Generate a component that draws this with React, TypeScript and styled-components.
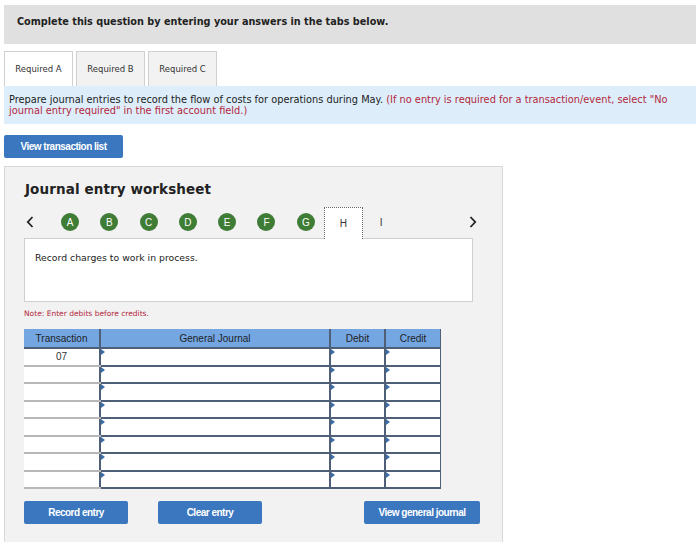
import styled, { createGlobalStyle } from 'styled-components'

const GlobalStyle = createGlobalStyle`
  html, body {
    margin: 0;
    padding: 0;
    background: #fff;
  }
  body {
    font-family: 'DejaVu Sans', Verdana, sans-serif;
    color: #222;
  }
`

const Page = styled.div`
  width: 700px;
  padding: 5px 4px 0 4px;
  box-sizing: border-box;
`

const Banner = styled.div`
  background: #e0e0e0;
  height: 39px;
  box-sizing: border-box;
  display: flex;
  align-items: center;
  padding: 0 0 6px 13px;
  font-size: 9.7px;
  font-weight: 700;
  color: #222;
`

const Tabs = styled.div`
  display: flex;
  gap: 3px;
  margin-top: 7px;
`

const Tab = styled.div<{ $active?: boolean }>`
  width: 69px;
  height: 35px;
  box-sizing: border-box;
  display: flex;
  align-items: center;
  justify-content: center;
  font-size: 8.5px;
  color: #333;
  border: 1px solid #d0d0d0;
  border-bottom: none;
  background: ${(p) => (p.$active ? '#fff' : '#f2f2f2')};
`

const Info = styled.div`
  background: #ddeefa;
  padding: 8px 5px 0 5px;
  font-size: 9.8px;
  line-height: 11px;
  color: #222;
  height: 38px;
  box-sizing: border-box;
`

const Red = styled.span`
  color: #b3263b;
`

const Button = styled.button<{ $w: number }>`
  width: ${(p) => p.$w}px;
  height: 23px;
  background: #3a77bf;
  color: #fff;
  border: none;
  border-radius: 2px;
  font-family: 'Liberation Sans', Arial, sans-serif;
  font-weight: 700;
  font-size: 10px;
  letter-spacing: -0.5px;
  padding: 0;
  cursor: pointer;
`

const TopButtonRow = styled.div`
  margin-top: 11px;
`

const Panel = styled.div`
  margin-top: 8px;
  width: 499px;
  height: 380px;
  box-sizing: border-box;
  background: #f2f2f2;
  border: 1px solid #d8d8d8;
  border-bottom: none;
  padding: 14px 0 0 19px;
`

const Title = styled.h2`
  margin: 0 0 0 1px;
  font-size: 13.5px;
  font-weight: 700;
  color: #222;
  letter-spacing: 0.1px;
`

const NavRow = styled.div`
  display: flex;
  align-items: center;
  height: 32px;
  margin-top: 9px;
`

const Arrow = styled.span`
  width: 12px;
  display: flex;
  justify-content: center;
  color: #222;
`

const Circle = styled.span`
  width: 18px;
  height: 18px;
  border-radius: 50%;
  background: #3f7c36;
  color: #fff;
  font-family: 'Liberation Sans', Arial, sans-serif;
  font-size: 10px;
  display: flex;
  align-items: center;
  justify-content: center;
  flex-shrink: 0;
`

const Circles = styled.div`
  display: flex;
  align-items: center;
  gap: 21.3px;
  margin-left: 25px;
`

const Current = styled.div`
  width: 39px;
  height: 32px;
  box-sizing: border-box;
  margin-left: 9px;
  background: #fff;
  border: 1px dotted #666;
  border-bottom: none;
  display: flex;
  align-items: center;
  justify-content: center;
  font-family: 'Liberation Sans', Arial, sans-serif;
  font-size: 10px;
  color: #333;
  position: relative;
  top: 1px;
`

const NextLetter = styled.span`
  margin-left: 17px;
  font-family: 'Liberation Sans', Arial, sans-serif;
  font-size: 10px;
  color: #333;
`

const NextArrow = styled(Arrow)`
  margin-left: 84px;
`

const Description = styled.div`
  width: 449px;
  height: 64px;
  box-sizing: border-box;
  background: #fff;
  border: 1px solid #cfcfcf;
  padding: 13px 10px;
  font-size: 9.3px;
  color: #222;
`

const Note = styled.div`
  margin-top: 7px;
  font-size: 7.5px;
  color: #b3263b;
`

const Table = styled.table`
  margin-top: 11px;
  border-collapse: collapse;
  font-family: 'Liberation Sans', Arial, sans-serif;
  font-size: 10px;
`

const Th = styled.th<{ $w: number }>`
  width: ${(p) => p.$w}px;
  height: 18px;
  padding: 0;
  background: #74a6e2;
  color: #1e1e1e;
  font-weight: 400;
  border-left: 2px solid #4e5f77;
  border-bottom: 2px solid #4e5f77;
  &:first-child {
    border-left: none;
  }
  &:last-child {
    border-right: 1px solid #4e5f77;
  }
`

const TransCell = styled.td`
  height: 15.5px;
  padding: 0;
  background: #fff;
  text-align: center;
  color: #333;
  border-bottom: 2px solid #b8b8b8;
`

const InputCell = styled.td`
  height: 15.5px;
  padding: 0;
  background: #fff;
  border-left: 2px solid #4e5f77;
  border-bottom: 2px solid #4e5f77;
  position: relative;
  &:last-child {
    border-right: 1px solid #4e5f77;
  }
  &::before {
    content: '';
    position: absolute;
    left: 0;
    top: 0;
    border-top: 3px solid transparent;
    border-bottom: 3px solid transparent;
    border-left: 4px solid #3a6ea8;
  }
`

const BottomRow = styled.div`
  display: flex;
  margin-top: 12px;
`

const Spacer = styled.div<{ $w: number }>`
  width: ${(p) => p.$w}px;
`

const ChevronLeft = () => (
  <svg width="8" height="12" viewBox="0 0 8 12">
    <path d="M6.5 1 L1.8 6 L6.5 11" fill="none" stroke="#222" strokeWidth="1.8" />
  </svg>
)

const ChevronRight = () => (
  <svg width="8" height="12" viewBox="0 0 8 12">
    <path d="M1.5 1 L6.2 6 L1.5 11" fill="none" stroke="#222" strokeWidth="1.8" />
  </svg>
)

const letters = ['A', 'B', 'C', 'D', 'E', 'F', 'G']
const rows = ['07', '', '', '', '', '', '', '']

const App = () => (
  <>
    <GlobalStyle />
    <Page>
      <Banner>Complete this question by entering your answers in the tabs below.</Banner>
      <Tabs>
        <Tab $active>Required A</Tab>
        <Tab>Required B</Tab>
        <Tab>Required C</Tab>
      </Tabs>
      <Info>
        Prepare journal entries to record the flow of costs for operations during May.{' '}
        <Red>
          (If no entry is required for a transaction/event, select "No journal entry required" in the
          first account field.)
        </Red>
      </Info>
      <TopButtonRow>
        <Button $w={119}>View transaction list</Button>
      </TopButtonRow>
      <Panel>
        <Title>Journal entry worksheet</Title>
        <NavRow>
          <Arrow>
            <ChevronLeft />
          </Arrow>
          <Circles>
            {letters.map((l) => (
              <Circle key={l}>{l}</Circle>
            ))}
          </Circles>
          <Current>H</Current>
          <NextLetter>I</NextLetter>
          <NextArrow>
            <ChevronRight />
          </NextArrow>
        </NavRow>
        <Description>Record charges to work in process.</Description>
        <Note>Note: Enter debits before credits.</Note>
        <Table>
          <thead>
            <tr>
              <Th $w={75}>Transaction</Th>
              <Th $w={228}>General Journal</Th>
              <Th $w={53}>Debit</Th>
              <Th $w={54}>Credit</Th>
            </tr>
          </thead>
          <tbody>
            {rows.map((r, i) => (
              <tr key={i}>
                <TransCell>{r}</TransCell>
                <InputCell />
                <InputCell />
                <InputCell />
              </tr>
            ))}
          </tbody>
        </Table>
        <BottomRow>
          <Button $w={104}>Record entry</Button>
          <Spacer $w={30} />
          <Button $w={104}>Clear entry</Button>
          <Spacer $w={102} />
          <Button $w={116}>View general journal</Button>
        </BottomRow>
      </Panel>
    </Page>
  </>
)

export default App
